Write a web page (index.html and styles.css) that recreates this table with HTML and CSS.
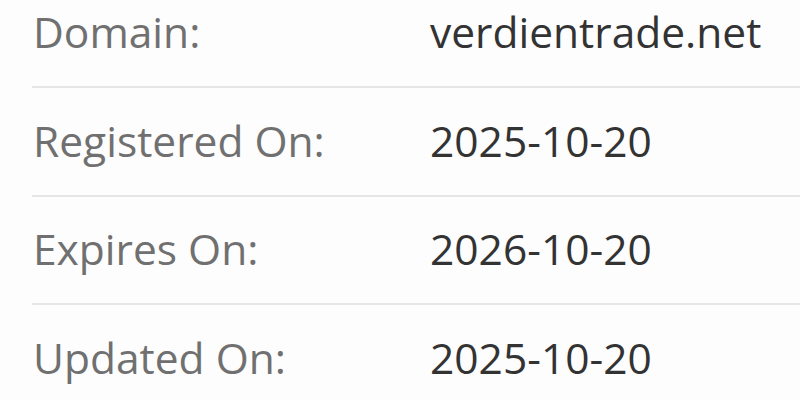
FILE: index.html
```html
<!DOCTYPE html>
<html>
<head>
<meta charset="utf-8">
<link rel="stylesheet" href="styles.css">
</head>
<body>
<div class="info">
  <div class="row"><div class="label">Domain:</div><div class="value">verdientrade.net</div></div>
  <div class="row"><div class="label">Registered On:</div><div class="value">2025-10-20</div></div>
  <div class="row"><div class="label">Expires On:</div><div class="value">2026-10-20</div></div>
  <div class="row"><div class="label">Updated On:</div><div class="value">2025-10-20</div></div>
</div>
</body>
</html>
```
FILE: styles.css
```css
html, body {
  margin: 0;
  padding: 0;
  background: #fdfdfd;
  overflow: hidden;
}
body {
  font-family: "Open Sans", sans-serif;
  font-size: 42.5px;
  line-height: 66px;
}
.info {
  margin-top: -20.5px;
  margin-left: 32px;
}
.row {
  display: flex;
  padding: 19.5px 0 21px;
  border-bottom: 2px solid #e6e6e6;
}
.label {
  width: 397px;
  flex: none;
  padding-left: 1px;
  color: #707070;
}
.value {
  color: #333333;
}
```
